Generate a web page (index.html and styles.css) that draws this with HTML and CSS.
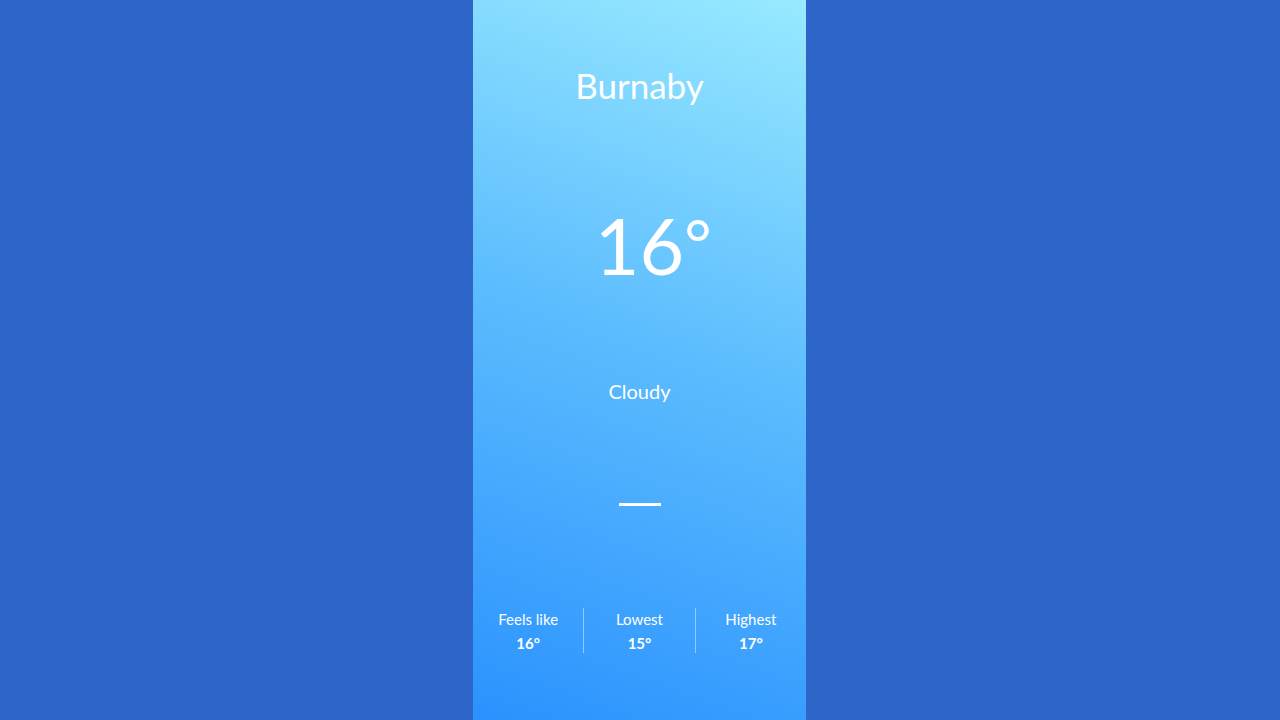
FILE: index.html
```html
<!DOCTYPE html>
<html>
<head>
<meta charset="utf-8">
<link rel="stylesheet" href="styles.css">
</head>
<body>
<div class="page">
  <main class="card">
    <h1 class="city">Burnaby</h1>
    <div class="temp"><span class="temp-num">16<span class="deg">°</span></span></div>
    <div class="cond">Cloudy</div>
    <div class="bar"></div>
    <div class="stats">
      <div class="stat"><div class="label">Feels like</div><div class="value">16°</div></div>
      <div class="stat"><div class="label">Lowest</div><div class="value">15°</div></div>
      <div class="stat"><div class="label">Highest</div><div class="value">17°</div></div>
    </div>
  </main>
</div>
</body>
</html>
```
FILE: styles.css
```css
html, body { margin: 0; padding: 0; }
body { background: #2d65c8; font-family: "Lato", "Open Sans", sans-serif; color: #fff; }
.page { display: flex; justify-content: center; height: 720px; padding-right: 1px; }
.card {
  width: 333px; height: 720px;
  background: linear-gradient(200deg, #98eaff 0%, #5fbefe 45%, #2a92fe 100%);
  display: flex; flex-direction: column; align-items: center;
}
.city { margin: 63px 0 0; font-size: 35px; font-weight: 400; line-height: 44px; }
.temp { margin-top: 100px; height: 77px; display: flex; justify-content: center; }
.temp-num { position: relative; font-size: 77px; line-height: 77px; font-weight: 400; }
.deg { position: absolute; left: 100%; top: 3px; font-size: 66px; line-height: 66px; }
.cond { margin-top: 94px; font-size: 20px; line-height: 26px; }
.bar { margin-top: 99px; width: 42px; height: 3px; background: #fff; }
.stats { margin-top: 102px; display: flex; width: 100%; }
.stat { flex: 1; display: flex; flex-direction: column; align-items: center; box-sizing: border-box; padding-top: 2px; height: 45px; gap: 6px; border-left: 1px solid rgba(255,255,255,0.45); }
.stat:first-child { border-left: none; }
.label { font-size: 15px; line-height: 18px; }
.value { font-size: 15px; line-height: 18px; font-weight: 700; }
```
